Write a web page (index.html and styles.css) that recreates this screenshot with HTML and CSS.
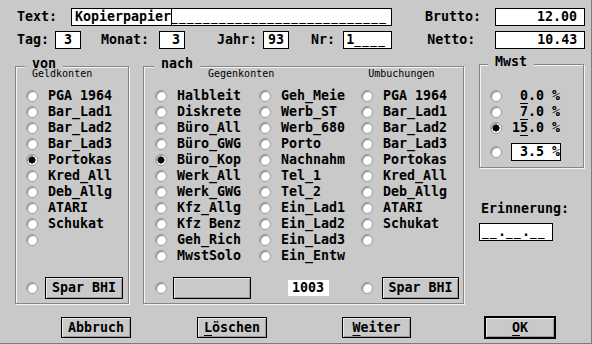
FILE: index.html
```html
<!DOCTYPE html>
<html lang="de">
<head>
<meta charset="utf-8">
<title>Buchung</title>
<link rel="stylesheet" href="styles.css">
</head>
<body>
<div class="dialog">
  <div class="row row1">
    <span class="lbl">Text:</span>
    <span class="field f-text">Kopierpapier<span class="cursor"></span><span class="us">___________________________</span></span>
    <span class="lbl ml-brutto">Brutto:</span>
    <span class="field f-money">12.00</span>
  </div>
  <div class="row row2">
    <span class="lbl">Tag:</span>
    <span class="field f-tag"> 3</span>
    <span class="lbl ml-monat">Monat:</span>
    <span class="field f-monat">3</span>
    <span class="lbl ml-jahr">Jahr:</span>
    <span class="field f-jahr">93</span>
    <span class="lbl ml-nr">Nr:</span>
    <span class="field f-nr">1<span class="us">____</span></span>
    <span class="lbl ml-netto">Netto:</span>
    <span class="field f-money f-netto">10.43</span>
  </div>

  <div class="main">
    <div class="group g-von">
      <span class="legend">von</span>
      <div class="sub sub-von">Geldkonten</div>
      <div class="list list-von">
        <div class="opt"><span class="radio"></span>PGA 1964</div>
        <div class="opt"><span class="radio"></span>Bar_Lad1</div>
        <div class="opt"><span class="radio"></span>Bar_Lad2</div>
        <div class="opt"><span class="radio"></span>Bar_Lad3</div>
        <div class="opt"><span class="radio on"></span>Portokas</div>
        <div class="opt"><span class="radio"></span>Kred_All</div>
        <div class="opt"><span class="radio"></span>Deb_Allg</div>
        <div class="opt"><span class="radio"></span>ATARI</div>
        <div class="opt"><span class="radio"></span>Schukat</div>
        <div class="opt"><span class="radio"></span></div>
      </div>
      <div class="bottom bottom-von">
        <span class="radio"></span>
        <span class="btn b-spar b-spar-von">Spar BHI</span>
      </div>
    </div>

    <div class="group g-nach">
      <span class="legend">nach</span>
      <div class="subs">
        <span class="sub sub-gegen">Gegenkonten</span>
        <span class="sub sub-umb">Umbuchungen</span>
      </div>
      <div class="cols">
        <div class="list">
          <div class="opt"><span class="radio"></span>Halbleit</div>
          <div class="opt"><span class="radio"></span>Diskrete</div>
          <div class="opt"><span class="radio"></span>Büro_All</div>
          <div class="opt"><span class="radio"></span>Büro_GWG</div>
          <div class="opt"><span class="radio on"></span>Büro_Kop</div>
          <div class="opt"><span class="radio"></span>Werk_All</div>
          <div class="opt"><span class="radio"></span>Werk_GWG</div>
          <div class="opt"><span class="radio"></span>Kfz_Allg</div>
          <div class="opt"><span class="radio"></span>Kfz Benz</div>
          <div class="opt"><span class="radio"></span>Geh_Rich</div>
          <div class="opt"><span class="radio"></span>MwstSolo</div>
        </div>
        <div class="list">
          <div class="opt"><span class="radio"></span>Geh_Meie</div>
          <div class="opt"><span class="radio"></span>Werb_ST</div>
          <div class="opt"><span class="radio"></span>Werb_680</div>
          <div class="opt"><span class="radio"></span>Porto</div>
          <div class="opt"><span class="radio"></span>Nachnahm</div>
          <div class="opt"><span class="radio"></span>Tel_1</div>
          <div class="opt"><span class="radio"></span>Tel_2</div>
          <div class="opt"><span class="radio"></span>Ein_Lad1</div>
          <div class="opt"><span class="radio"></span>Ein_Lad2</div>
          <div class="opt"><span class="radio"></span>Ein_Lad3</div>
          <div class="opt"><span class="radio"></span>Ein_Entw</div>
        </div>
        <div class="list">
          <div class="opt"><span class="radio"></span>PGA 1964</div>
          <div class="opt"><span class="radio"></span>Bar_Lad1</div>
          <div class="opt"><span class="radio"></span>Bar_Lad2</div>
          <div class="opt"><span class="radio"></span>Bar_Lad3</div>
          <div class="opt"><span class="radio"></span>Portokas</div>
          <div class="opt"><span class="radio"></span>Kred_All</div>
          <div class="opt"><span class="radio"></span>Deb_Allg</div>
          <div class="opt"><span class="radio"></span>ATARI</div>
          <div class="opt"><span class="radio"></span>Schukat</div>
          <div class="opt"><span class="radio"></span></div>
        </div>
      </div>
      <div class="bottom bottom-nach">
        <span class="radio"></span>
        <span class="btn b-empty"></span>
        <span class="num">1003</span>
        <span class="radio r-umb"></span>
        <span class="btn b-spar b-spar-umb">Spar BHI</span>
      </div>
    </div>

    <div class="side">
      <div class="group g-mwst">
        <span class="legend">Mwst</span>
        <div class="opt"><span class="radio"></span><span class="pct"> <u>0</u>.0 %</span></div>
        <div class="opt"><span class="radio"></span><span class="pct"> <u>7</u>.0 %</span></div>
        <div class="opt"><span class="radio on"></span><span class="pct">1<u>5</u>.0 %</span></div>
        <div class="opt opt-field"><span class="radio"></span><span class="field f-pct"> 3.5 %</span></div>
      </div>
      <div class="erin-lbl">Erinnerung:</div>
      <div class="field f-date"><span class="us">__</span>.<span class="us">__</span>.<span class="us">__</span></div>
    </div>
  </div>

  <div class="buttons">
    <span class="btn b-abbruch">Abbruch</span>
    <span class="btn b-loeschen"><u>L</u>öschen</span>
    <span class="btn b-weiter"><u>W</u>eiter</span>
    <span class="btn b-ok"><u>O</u>K</span>
  </div>
</div>
</body>
</html>
```

FILE: styles.css
```css
html, body {
  margin: 0;
  padding: 0;
  background: #c9c9c9;
}

.dialog {
  width: 592px;
  height: 344px;
  box-sizing: border-box;
  padding-top: 8px;
  background: #c9c9c9;
  border-right: 1px solid #7c7c7c;
  border-bottom: 1px solid #7c7c7c;
  font-family: "DejaVu Sans Mono", "Liberation Mono", monospace;
  font-weight: bold;
  font-size: 13.3px;
  line-height: 16px;
  color: #000;
  overflow: hidden;
}

u {
  text-decoration: underline;
  text-decoration-thickness: 1px;
  text-underline-offset: 3px;
}

/* underscores drawn as separate dashes, as in the 8px system font */
.us {
  font-size: 11px;
  letter-spacing: 1.38px;
}

/* ---------- header rows ---------- */
.row {
  display: flex;
  align-items: center;
  height: 18px;
  padding-left: 17px;
}
.row2 { margin-top: 5px; }

.lbl { white-space: pre; }

.field {
  display: inline-block;
  box-sizing: border-box;
  height: 18px;
  line-height: 16px;
  border: 1px solid #000;
  background: #fff;
  white-space: pre;
  overflow: hidden;
}

.f-text { margin-left: 14px; width: 321px; padding-left: 3px; }
.cursor {
  display: inline-block;
  width: 0;
  height: 16px;
  vertical-align: top;
  border-left: 1px solid #000;
  margin-right: -1px;
}
.ml-brutto { margin-left: 33px; }
.f-money { margin-left: 14px; width: 90px; text-align: right; padding-right: 7px; }
.f-netto { margin-left: 20px; }

.f-tag { margin-left: 6px; width: 26px; padding-left: 0; }
.ml-monat { margin-left: 20px; }
.f-monat { margin-left: 10px; width: 26px; text-align: right; padding-right: 4px; }
.ml-jahr { margin-left: 32px; }
.f-jahr { margin-left: 6px; width: 26px; text-align: right; padding-right: 4px; }
.ml-nr { margin-left: 22px; }
.f-nr { margin-left: 8px; width: 49px; padding-left: 2px; }
.ml-netto { margin-left: 35px; }

/* ---------- main area ---------- */
.main {
  display: flex;
  align-items: flex-start;
  margin-top: 17px;
  padding-left: 15px;
}

.group {
  position: relative;
  box-sizing: border-box;
  border: 1px solid #858585;
  box-shadow: inset 1px 1px 0 #f4f4f4, 1px 1px 0 #f4f4f4;
  display: flex;
  flex-direction: column;
}

.legend {
  position: absolute;
  top: -11px;
  padding: 0 7px;
  line-height: 16px;
  /* only mask the frame line, not the subtitle below */
  background: linear-gradient(transparent 8px, #c9c9c9 8px, #c9c9c9 12px, transparent 12px);
}

.sub {
  font-family: "DejaVu Sans Mono", monospace;
  font-weight: normal;
  font-size: 10px;
  line-height: 12px;
}

.g-von { width: 114px; height: 238px; }
.g-von .legend { left: 9px; }
.sub-von { margin-top: 1px; padding-left: 16px; }
.list-von { padding-left: 10px; }

.list { margin-top: 8px; }
.cols .list { margin-top: 0; }

.opt {
  display: flex;
  align-items: center;
  height: 16px;
  gap: 10px;
  white-space: pre;
}

.radio {
  flex: none;
  box-sizing: border-box;
  width: 12px;
  height: 12px;
  border-radius: 50%;
  border: 1px solid #9c9c9c;
  background: radial-gradient(circle at 60% 60%, #ffffff 0 55%, #e6e6e6 80%);
  box-shadow: inset 1px 1px 1px #8a8a8a;
}
.radio.on {
  background: radial-gradient(circle at 50% 50%, #000 0 3.3px, #fff 3.8px);
}

.bottom {
  display: flex;
  align-items: center;
  margin-top: auto;
  margin-bottom: 4px;
  height: 22px;
}
.bottom-von { padding-left: 10px; }

.btn {
  display: inline-flex;
  align-items: center;
  justify-content: center;
  box-sizing: border-box;
  height: 22px;
  border: 1px solid #000;
  background: #c9c9c9;
  box-shadow: inset 1px 1px 0 #ececec, inset -1px -1px 0 #9a9a9a;
  white-space: pre;
}
.b-spar { width: 78px; }
.b-spar-von { margin-left: 7px; }

.g-nach { width: 321px; height: 238px; margin-left: 14px; }
.g-nach .legend { left: 10px; }
.subs {
  display: flex;
  margin-top: 1px;
  padding-left: 64px;
}
.sub-umb { margin-left: 94px; }
.cols {
  display: grid;
  grid-template-columns: 104px 102px 1fr;
  margin-top: 8px;
  padding-left: 11px;
}
.bottom-nach { padding-left: 11px; }
.b-empty { margin-left: 6px; width: 78px; }
.num {
  margin-left: 37px;
  width: 41px;
  height: 16px;
  line-height: 16px;
  background: #fff;
  text-align: right;
  padding-right: 5px;
  box-sizing: border-box;
}
.r-umb { margin-left: 32px; }
.b-spar-umb { margin-left: 9px; width: 77px; }

/* ---------- side column ---------- */
.side {
  width: 105px;
  margin-left: 15px;
  margin-top: -2px;
  display: flex;
  flex-direction: column;
}
.g-mwst { width: 105px; height: 104px; padding-top: 23px; padding-left: 10px; }
.g-mwst .legend { left: 8px; }
.pct { white-space: pre; }
.opt-field { height: 18px; margin-top: 7px; gap: 9px; }
.f-pct { width: 50px; padding-left: 0; }

.erin-lbl { margin-top: 33px; padding-left: 2px; }
.f-date { margin-top: 6px; width: 74px; padding-left: 2px; }

/* ---------- buttons ---------- */
.buttons {
  display: flex;
  align-items: flex-start;
  margin-top: 13px;
  padding-left: 61px;
}
.buttons .btn { height: 21px; }
.b-abbruch { width: 70px; }
.b-loeschen { width: 70px; margin-left: 66px; }
.b-weiter { width: 69px; margin-left: 75px; }
.buttons .b-ok {
  width: 72px;
  height: 23px;
  margin-left: 73px;
  margin-top: -1px;
  border-width: 2px;
}
```
